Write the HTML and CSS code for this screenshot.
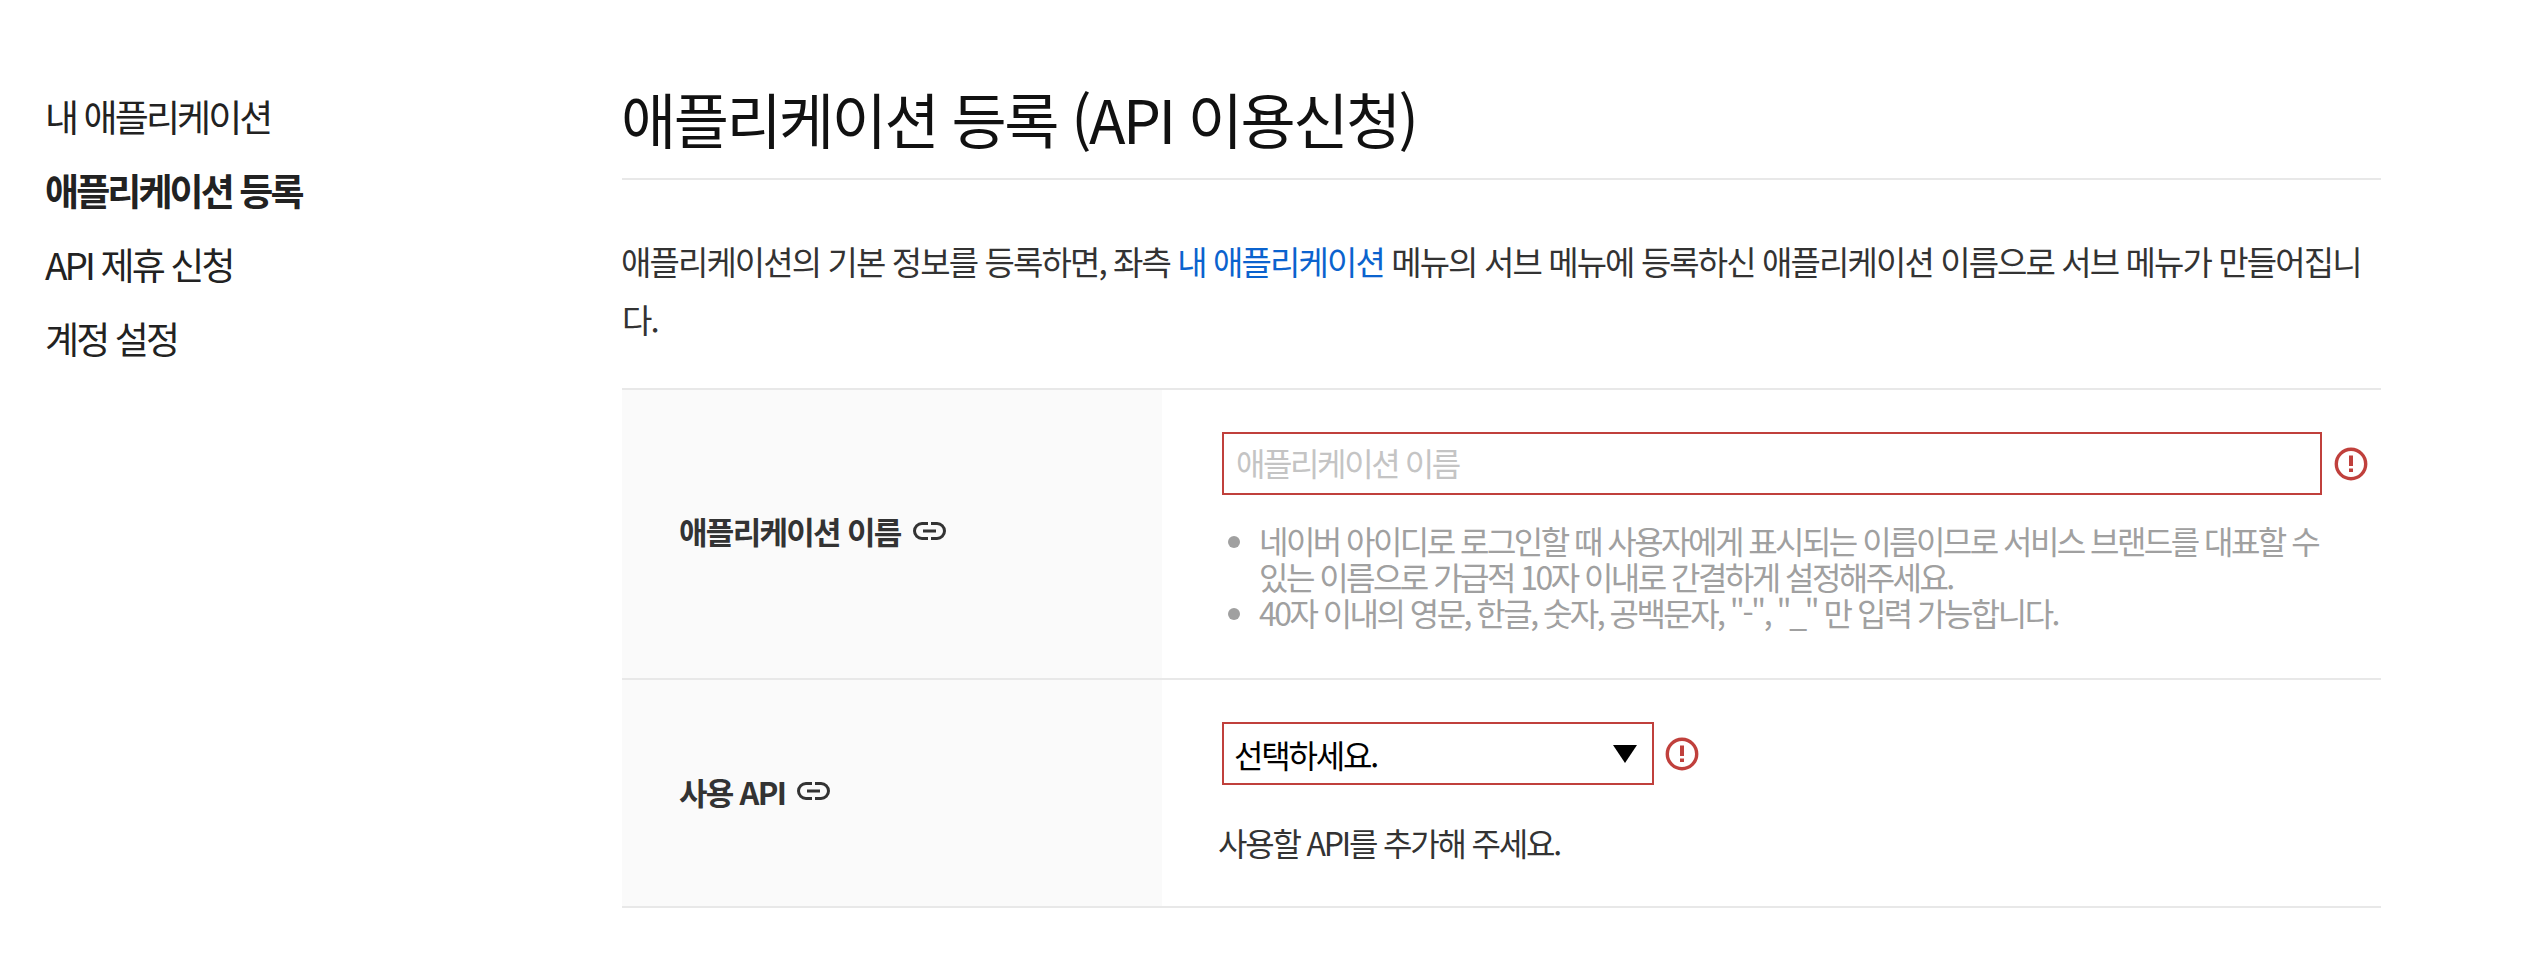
FILE: index.html
```html
<!DOCTYPE html>
<html lang="ko">
<head>
<meta charset="utf-8">
<title>애플리케이션 등록</title>
<link rel="stylesheet" href="styles.css">
</head>
<body>
<div class="page">
  <nav class="side">
    <a class="side-item">내 애플리케이션</a>
    <a class="side-item active">애플리케이션 등록</a>
    <a class="side-item">API 제휴 신청</a>
    <a class="side-item">계정 설정</a>
  </nav>
  <main class="main">
    <h1 class="title">애플리케이션 등록 (API 이용신청)</h1>
    <p class="intro">애플리케이션의 기본 정보를 등록하면, 좌측 <a class="link">내 애플리케이션</a> 메뉴의 서브 메뉴에 등록하신 애플리케이션 이름으로 서브 메뉴가 만들어집니다.</p>
    <div class="form">
      <div class="row row-name">
        <div class="label">
          <span>애플리케이션 이름</span>
          <svg class="link-icon" viewBox="0 0 33 18"><path d="M15 1.500H9a7.500 7.500 0 0 0 0 15h6M18 1.500h6a7.500 7.500 0 0 1 0 15h-6M10 9h13" fill="none" stroke="#333" stroke-width="3"/></svg>
        </div>
        <div class="field">
          <div class="control">
            <div class="input">애플리케이션 이름</div>
            <svg class="err" viewBox="0 0 34 34"><circle cx="17" cy="17" r="14.7" fill="none" stroke="#c0403c" stroke-width="3.4"/><path d="M15 8.500h4v10.500h-4zM15 21.500h4v3.500h-4z" fill="#c0403c"/></svg>
          </div>
          <ul class="help">
            <li>네이버 아이디로 로그인할 때 사용자에게 표시되는 이름이므로 서비스 브랜드를 대표할 수 있는 이름으로 가급적 10자 이내로 간결하게 설정해주세요.</li>
            <li>40자 이내의 영문, 한글, 숫자, 공백문자, "-", "_" 만 입력 가능합니다.</li>
          </ul>
        </div>
      </div>
      <div class="row row-api">
        <div class="label">
          <span>사용 API</span>
          <svg class="link-icon" viewBox="0 0 33 18"><path d="M15 1.500H9a7.500 7.500 0 0 0 0 15h6M18 1.500h6a7.500 7.500 0 0 1 0 15h-6M10 9h13" fill="none" stroke="#333" stroke-width="3"/></svg>
        </div>
        <div class="field">
          <div class="control">
            <div class="select"><span>선택하세요.</span><i class="caret"></i></div>
            <svg class="err err-select" viewBox="0 0 34 34"><circle cx="17" cy="17" r="14.7" fill="none" stroke="#c0403c" stroke-width="3.4"/><path d="M15 8.500h4v10.500h-4zM15 21.500h4v3.500h-4z" fill="#c0403c"/></svg>
          </div>
          <p class="note">사용할 API를 추가해 주세요.</p>
        </div>
      </div>
    </div>
  </main>
</div>
</body>
</html>
```
FILE: styles.css
```css
* { box-sizing: border-box; }
html, body { margin: 0; padding: 0; background: #fff; }
body {
  font-family: "Noto Sans CJK KR", "Noto Sans", sans-serif;
  color: #333;
  height: 966px;
  overflow: hidden;
}
.page { display: flex; padding: 70px 147px 0 45px; }
.side { width: 577px; flex: none; display: flex; flex-direction: column; padding-top: 9px; }
.side-item {
  font-size: 37px;
  line-height: 74px;
  letter-spacing: -2.9px;
  color: #222;
}
.side-item.active { font-weight: 700; }
.main { flex: 1; min-width: 0; }
.title {
  margin: 0;
  height: 110px;
  font-size: 60px;
  line-height: 96px;
  font-weight: 400;
  letter-spacing: -2.5px;
  text-indent: -1px;
  color: #111;
  border-bottom: 2px solid #e8e8e8;
}
.intro {
  margin: 52px 0 0;
  font-size: 33px;
  line-height: 58px;
  letter-spacing: -1.9px;
  text-indent: -1px;
  color: #333;
  word-break: break-all;
}
.link { color: #0b63ce; }
.form { margin-top: 40px; border-top: 2px solid #e8e8e8; }
.row { display: flex; border-bottom: 2px solid #e8e8e8; }
.row-name { height: 290px; }
.row-api { height: 228px; }
.label {
  width: 540px;
  flex: none;
  background: #fafafa;
  padding: 0 0 7px 57px;
  display: flex;
  align-items: center;
  gap: 12px;
  font-size: 31px;
  font-weight: 700;
  letter-spacing: -1.7px;
  color: #333;
}
.row-api .label { padding-bottom: 4px; }
.link-icon { width: 33px; height: 18px; flex: none; }
.field { flex: 1; min-width: 0; padding: 42px 0 0 60px; }
.control { display: flex; align-items: center; }
.input {
  width: 1100px;
  height: 63px;
  border: 2px solid #c0403c;
  padding-left: 12px;
  font-size: 32px;
  line-height: 57px;
  letter-spacing: -2.4px;
  color: #c4c4c4;
}
.err { width: 34px; height: 34px; margin-left: 12px; flex: none; }
.err-select { margin-left: 11px; }
.help {
  margin: 27px 0 0;
  padding: 0 0 0 37px;
  width: 1112px;
  font-size: 32px;
  line-height: 36px;
  letter-spacing: -2.55px;
  color: #a0a0a0;
}
.select {
  width: 432px;
  height: 63px;
  border: 2px solid #c0403c;
  padding: 0 15px 0 10px;
  display: flex;
  align-items: center;
  justify-content: space-between;
  font-size: 32px;
  letter-spacing: -2.2px;
  color: #000;
}
.caret {
  width: 0;
  height: 0;
  border-left: 12px solid transparent;
  border-right: 12px solid transparent;
  border-top: 18px solid #000;
}
.note {
  margin: 34px 0 0 -4px;
  font-size: 32px;
  line-height: 46px;
  letter-spacing: -2.2px;
  color: #333;
}
```
